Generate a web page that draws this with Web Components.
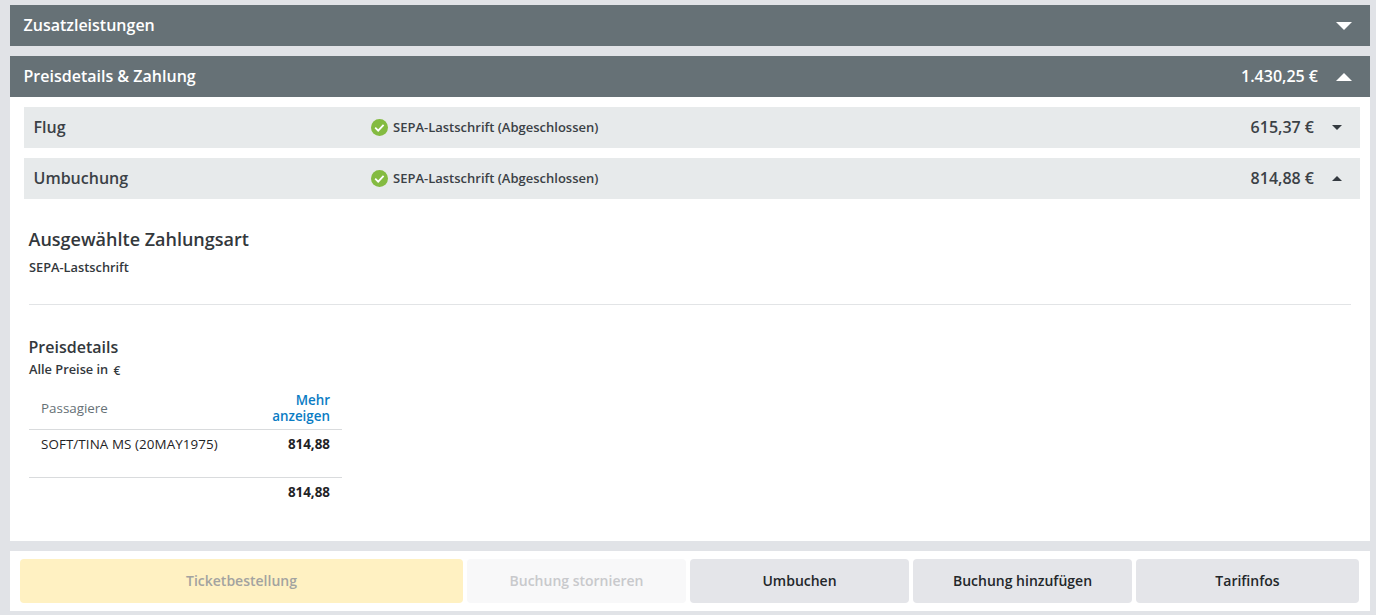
<!DOCTYPE html>
<html lang="de">
<head>
<meta charset="utf-8">
<title>Preisdetails</title>
<style>
  html, body { margin: 0; height: 615px; overflow: hidden; background: #e1e3e7; }
  body { padding: 5px 6px 0 10px; box-sizing: border-box; font-family: "Open Sans", sans-serif; color: #2f3438; }
  acc-section { margin-bottom: 10px; }
</style>
</head>
<body>
<acc-section title="Zusatzleistungen" dir-state="down"></acc-section>
<acc-section title="Preisdetails &amp; Zahlung" price="1.430,25 €" dir-state="up">
  <pay-row label="Flug" status="SEPA-Lastschrift (Abgeschlossen)" price="615,37 €" dir-state="down"></pay-row>
  <pay-row label="Umbuchung" status="SEPA-Lastschrift (Abgeschlossen)" price="814,88 €" dir-state="up"></pay-row>
  <pay-method></pay-method>
  <price-details></price-details>
</acc-section>
<action-bar>
  <action-btn kind="yellow">Ticketbestellung</action-btn>
  <action-btn kind="off">Buchung stornieren</action-btn>
  <action-btn>Umbuchen</action-btn>
  <action-btn>Buchung hinzufügen</action-btn>
  <action-btn>Tarifinfos</action-btn>
</action-bar>

<script>
const caret = (dir, w, h, color) => {
  const pts = dir === "up" ? `0,${h} ${w},${h} ${w / 2},0` : `0,0 ${w},0 ${w / 2},${h}`;
  return `<svg width="${w}" height="${h}" viewBox="0 0 ${w} ${h}"><polygon points="${pts}" fill="${color}"/></svg>`;
};

class AccSection extends HTMLElement {
  connectedCallback() {
    const price = this.getAttribute("price");
    const dir = this.getAttribute("dir-state");
    this.attachShadow({ mode: "open" }).innerHTML = `
      <style>
        :host { display: block; }
        .head {
          height: 41px;
          background: #667176;
          color: #fff;
          display: flex;
          align-items: center;
          padding: 0 18px 0 14px;
          font-size: 16px;
          font-weight: 600;
        }
        .title { flex: 1; margin: -2px 0 0 -0.5px; }
        .price { margin: -2px 18px 0 0; }
        svg { display: block; }
        .body { background: #fff; padding: 10px 10px 0 14px; }
        .body.empty { display: none; }
      </style>
      <div class="head">
        <span class="title">${this.getAttribute("title")}</span>
        ${price ? `<span class="price">${price}</span>` : ""}
        ${caret(dir, 16, 8, "#fff")}
      </div>
      <div class="body ${this.children.length ? "" : "empty"}"><slot></slot></div>
    `;
  }
}

class PayRow extends HTMLElement {
  connectedCallback() {
    this.attachShadow({ mode: "open" }).innerHTML = `
      <style>
        :host { display: block; margin-bottom: 10px; }
        .row {
          height: 41px;
          background: #e7eaeb;
          display: flex;
          align-items: center;
          padding: 0 18px 0 9.5px;
          color: #3b4146;
        }
        .label { width: 337.5px; font-size: 16px; font-weight: 600; margin-top: -2px; }
        .status { flex: 1; display: flex; align-items: center; gap: 5px; font-size: 13px; font-weight: 600; }
        .status span { margin-top: -2px; }
        .price { font-size: 16px; font-weight: 600; margin: -2px 18px 0 0; }
        svg { display: block; }
      </style>
      <div class="row">
        <span class="label">${this.getAttribute("label")}</span>
        <span class="status">
          <svg width="17" height="17" viewBox="0 0 17 17">
            <circle cx="8.5" cy="8.5" r="8.5" fill="#84bb41"/>
            <path d="M4.2 8.6l3 3 5.4-5.8" fill="none" stroke="#fff" stroke-width="1.8"/>
          </svg>
          <span>${this.getAttribute("status")}</span>
        </span>
        <span class="price">${this.getAttribute("price")}</span>
        ${caret(this.getAttribute("dir-state"), 10, 5, "#343a40")}
      </div>
    `;
  }
}

class PayMethod extends HTMLElement {
  connectedCallback() {
    this.attachShadow({ mode: "open" }).innerHTML = `
      <style>
        :host { display: block; padding: 0 0 0 5px; }
        h2 { margin: 0 0 0 -0.5px; padding-top: 18px; font-size: 18px; line-height: 25px; font-weight: 600; color: #33383c; }
        p { margin: 0; padding-top: 7px; height: 45px; font-size: 12.8px; line-height: 17px; font-weight: 600; color: #33383c; }
        hr { border: 0; border-top: 1px solid #e2e4e6; margin: 0; width: 1322px; }
      </style>
      <h2>Ausgewählte Zahlungsart</h2>
      <p>SEPA-Lastschrift</p>
      <hr>
    `;
  }
}

class PriceDetails extends HTMLElement {
  connectedCallback() {
    this.attachShadow({ mode: "open" }).innerHTML = `
      <style>
        :host { display: block; padding: 31px 0 40px 5px; }
        h3 { margin: 0 0 0 -0.5px; font-size: 16px; line-height: 22px; font-weight: 600; color: #33383c; }
        .unit { margin-top: 1px; font-size: 12.8px; line-height: 20px; font-weight: 600; color: #33383c; }
        .unit span { font-size: 12px; margin-left: 2px; vertical-align: -1px; }
        .table { width: 313px; margin-top: 5px; font-size: 13.4px; color: #1f2326; }
        .tr { display: flex; justify-content: space-between; padding: 0 12px; box-sizing: border-box; }
        .th { height: 44px; align-items: center; border-bottom: 1px solid #d9dbdd; color: #667176; }
        .more { color: #0a7cc4; font-weight: 600; text-align: right; line-height: 16px; width: 70px; }
        .pax { height: 48px; padding-top: 5px; line-height: 18px; border-bottom: 1px solid #d9dbdd; }
        .pax span { letter-spacing: 0.08px; }
        .sum { padding-top: 5px; line-height: 18px; justify-content: flex-end; }
        b { font-weight: 700; }
      </style>
      <h3>Preisdetails</h3>
      <div class="unit">Alle Preise in <span>€</span></div>
      <div class="table">
        <div class="tr th"><span>Passagiere</span><span class="more">Mehr anzeigen</span></div>
        <div class="tr pax"><span>SOFT/TINA MS (20MAY1975)</span><b>814,88</b></div>
        <div class="tr sum"><b>814,88</b></div>
      </div>
    `;
  }
}

class ActionBar extends HTMLElement {
  connectedCallback() {
    this.attachShadow({ mode: "open" }).innerHTML = `
      <style>
        :host {
          display: grid;
          grid-template-columns: 443px 219px 219px 219px 223px;
          gap: 4px;
          background: #fff;
          padding: 8px 11px 8px 10px;
        }
      </style>
      <slot></slot>
    `;
  }
}

class ActionBtn extends HTMLElement {
  connectedCallback() {
    this.attachShadow({ mode: "open" }).innerHTML = `
      <style>
        :host {
          display: flex;
          align-items: center;
          justify-content: center;
          height: 44px;
          padding-bottom: 2px;
          box-sizing: border-box;
          border-radius: 4px;
          font-size: 14px;
          font-weight: 600;
          background: #e4e5e9;
          color: #23272a;
        }
        :host([kind="yellow"]) { background: #fff1c2; color: #a3a3a0; }
        :host([kind="off"]) { background: #f8f8f9; color: #c8c9cc; }
      </style>
      <slot></slot>
    `;
  }
}

customElements.define("acc-section", AccSection);
customElements.define("pay-row", PayRow);
customElements.define("pay-method", PayMethod);
customElements.define("price-details", PriceDetails);
customElements.define("action-bar", ActionBar);
customElements.define("action-btn", ActionBtn);
</script>
</body>
</html>
